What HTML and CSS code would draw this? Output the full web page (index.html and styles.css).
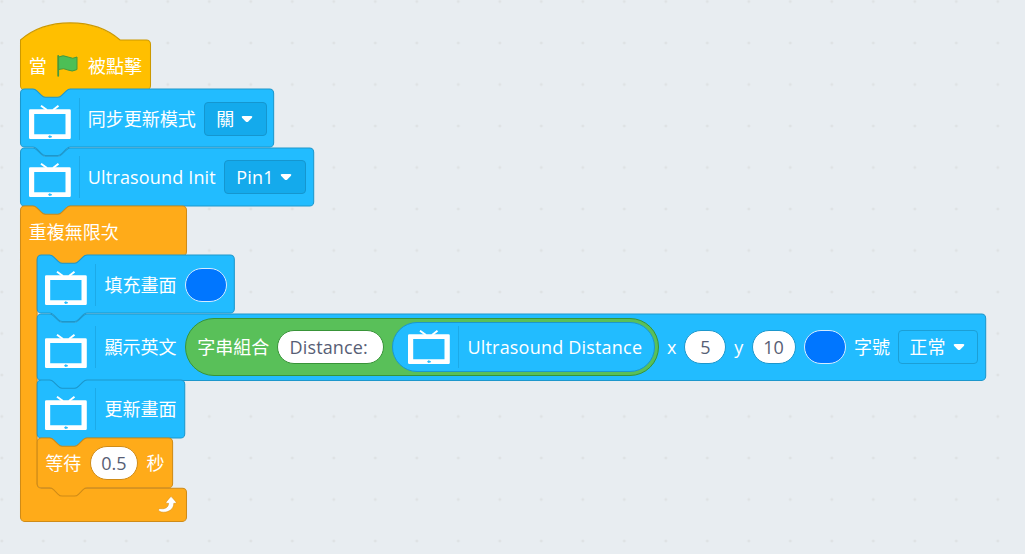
FILE: index.html
```html
<!DOCTYPE html>
<html lang="zh-Hant">
<head>
<meta charset="utf-8">
<title>Blocks</title>
<link rel="stylesheet" href="styles.css">
</head>
<body>
<svg class="defs" width="0" height="0">
  <defs>
    <symbol id="tv" viewBox="0 0 42 34">
      <path d="M12 .8 18 5M29.500 .8 24 5" stroke="#fff" stroke-width="2" fill="none"/>
      <path fill="#fff" fill-rule="evenodd" d="M1.300 4.300H40.500Q41.800 4.300 41.800 5.600V32.700Q41.800 34 40.500 34H1.300Q0 34 0 32.700V5.600Q0 4.300 1.300 4.300ZM5.200 9V29.200H36.500V9Z"/>
      <path fill="#22bcff" d="M19 31.700 20.500 30.300 22.900 31.200V32.200L20.500 33Z"/>
    </symbol>
    <symbol id="caret" viewBox="0 0 12 8">
      <path fill="#fff" d="M1.800 .9H10.200Q12 1.100 11 2.700L7.300 6.500Q6 7.600 4.700 6.500L1 2.700Q0 1.100 1.800 .9Z"/>
    </symbol>
    <pattern id="grid" x="-18.950" y="-19.250" width="41.500" height="41.500" patternUnits="userSpaceOnUse">
      <path d="M19.250 20.750H22.250M20.750 19.250V22.250" stroke="#dcdee0" stroke-width="1"/>
    </pattern>
  </defs>
</svg>
<main class="workspace">
  <svg class="grid" width="1025" height="554"><rect width="1025" height="554" fill="url(#grid)"/></svg>
  <div class="stack">
    <section class="block hat">
      <svg class="shape yellow" viewBox="-.5 0 1 1"><path transform="scale(1.0375)" d="M0 0C25-22 71-22 96 0H121.300a4 4 0 0 1 4 4V44a4 4 0 0 1-4 4H48c-2 0-3 1-4 2l-4 4c-1 1-2 2-4 2H24c-2 0-3-1-4-2l-4-4c-1-1-2-2-4-2H4a4 4 0 0 1-4-4Z"/></svg>
      <span class="label">當</span>
      <svg class="flag" viewBox="0 0 21 22"><path d="M1.500 2Q6-.5 11 2T20 2V14.500Q15 17.300 11 15T1.500 14.500Z" fill="#4cbf56" stroke="#45993d" stroke-width="1"/><path d="M1.200 1V20.800" stroke="#45993d" stroke-width="1.800" stroke-linecap="round"/></svg>
      <span class="label">被點擊</span>
    </section>
    <section class="block">
      <svg class="shape blue" viewBox="-.5 0 1 1"><path transform="scale(1.0375)" d="M0 4a4 4 0 0 1 4-4H12c2 0 3 1 4 2l4 4c1 1 2 2 4 2H36c2 0 3-1 4-2l4-4c1-1 2-2 4-2H240a4 4 0 0 1 4 4V52a4 4 0 0 1-4 4H48c-2 0-3 1-4 2l-4 4c-1 1-2 2-4 2H24c-2 0-3-1-4-2l-4-4c-1-1-2-2-4-2H4a4 4 0 0 1-4-4Z"/></svg>
      <svg class="tv"><use href="#tv"/></svg><i class="rule"></i>
      <span class="label">同步更新模式</span>
      <span class="dropdown">關<svg class="caret"><use href="#caret"/></svg></span>
    </section>
    <section class="block">
      <svg class="shape blue" viewBox="-.5 0 1 1"><path transform="scale(1.0375)" d="M0 4a4 4 0 0 1 4-4H12c2 0 3 1 4 2l4 4c1 1 2 2 4 2H36c2 0 3-1 4-2l4-4c1-1 2-2 4-2H278.600a4 4 0 0 1 4 4V52a4 4 0 0 1-4 4H48c-2 0-3 1-4 2l-4 4c-1 1-2 2-4 2H24c-2 0-3-1-4-2l-4-4c-1-1-2-2-4-2H4a4 4 0 0 1-4-4Z"/></svg>
      <svg class="tv"><use href="#tv"/></svg><i class="rule"></i>
      <span class="label w-init">Ultrasound Init</span>
      <span class="dropdown"><span class="w-pin">Pin1</span><svg class="caret"><use href="#caret"/></svg></span>
    </section>
    <section class="loop">
      <svg class="shape orange" viewBox="-.5 0 1 1"><path transform="scale(1.0375)" d="M0 4a4 4 0 0 1 4-4H12c2 0 3 1 4 2l4 4c1 1 2 2 4 2H36c2 0 3-1 4-2l4-4c1-1 2-2 4-2H156a4 4 0 0 1 4 4V44a4 4 0 0 1-4 4H64c-2 0-3 1-4 2l-4 4c-1 1-2 2-4 2H40c-2 0-3-1-4-2l-4-4c-1-1-2-2-4-2H20a4 4 0 0 0-4 4V268a4 4 0 0 0 4 4H156a4 4 0 0 1 4 4V300a4 4 0 0 1-4 4H4a4 4 0 0 1-4-4Z"/></svg>
      <div class="block short loop-head"><span class="label">重複無限次</span></div>
      <div class="loop-body">
        <section class="block">
          <svg class="shape blue" viewBox="-.2 0 1 1"><path transform="scale(1.0375)" d="M0 4a4 4 0 0 1 4-4H12c2 0 3 1 4 2l4 4c1 1 2 2 4 2H36c2 0 3-1 4-2l4-4c1-1 2-2 4-2H186a4 4 0 0 1 4 4V52a4 4 0 0 1-4 4H48c-2 0-3 1-4 2l-4 4c-1 1-2 2-4 2H24c-2 0-3-1-4-2l-4-4c-1-1-2-2-4-2H4a4 4 0 0 1-4-4Z"/></svg>
          <svg class="tv"><use href="#tv"/></svg><i class="rule"></i>
          <span class="label">填充畫面</span>
          <span class="color"></span>
        </section>
        <section class="block tall">
          <svg class="shape blue" viewBox="-.2 0 1 1"><path transform="scale(1.0375)" d="M0 4a4 4 0 0 1 4-4H12c2 0 3 1 4 2l4 4c1 1 2 2 4 2H36c2 0 3-1 4-2l4-4c1-1 2-2 4-2H910.200a4 4 0 0 1 4 4V60a4 4 0 0 1-4 4H48c-2 0-3 1-4 2l-4 4c-1 1-2 2-4 2H24c-2 0-3-1-4-2l-4-4c-1-1-2-2-4-2H4a4 4 0 0 1-4-4Z"/></svg>
          <svg class="tv"><use href="#tv"/></svg><i class="rule"></i>
          <span class="label">顯示英文</span>
          <span class="join">
            <span class="label">字串組合</span>
            <span class="input in-text"><span class="w-dist">Distance:</span></span>
            <span class="reporter">
              <svg class="tv"><use href="#tv"/></svg><i class="rule"></i>
              <span class="label w-report">Ultrasound Distance</span>
            </span>
          </span>
          <span class="label w-letter">x</span>
          <span class="input in-x">5</span>
          <span class="label w-letter">y</span>
          <span class="input in-y">10</span>
          <span class="color"></span>
          <span class="label">字號</span>
          <span class="dropdown plain">正常<svg class="caret"><use href="#caret"/></svg></span>
        </section>
        <section class="block">
          <svg class="shape blue" viewBox="-.2 0 1 1"><path transform="scale(1.0375)" d="M0 4a4 4 0 0 1 4-4H12c2 0 3 1 4 2l4 4c1 1 2 2 4 2H36c2 0 3-1 4-2l4-4c1-1 2-2 4-2H138.200a4 4 0 0 1 4 4V52a4 4 0 0 1-4 4H48c-2 0-3 1-4 2l-4 4c-1 1-2 2-4 2H24c-2 0-3-1-4-2l-4-4c-1-1-2-2-4-2H4a4 4 0 0 1-4-4Z"/></svg>
          <svg class="tv"><use href="#tv"/></svg><i class="rule"></i>
          <span class="label">更新畫面</span>
        </section>
        <section class="block short">
          <svg class="shape orange" viewBox="-.2 0 1 1"><path transform="scale(1.0375)" d="M0 4a4 4 0 0 1 4-4H12c2 0 3 1 4 2l4 4c1 1 2 2 4 2H36c2 0 3-1 4-2l4-4c1-1 2-2 4-2H126.500a4 4 0 0 1 4 4V44a4 4 0 0 1-4 4H48c-2 0-3 1-4 2l-4 4c-1 1-2 2-4 2H24c-2 0-3-1-4-2l-4-4c-1-1-2-2-4-2H4a4 4 0 0 1-4-4Z"/></svg>
          <span class="label">等待</span>
          <span class="input in-wait">0.5</span>
          <span class="label">秒</span>
        </section>
      </div>
      <div class="loop-foot">
        <svg class="repeat" viewBox="0 0 19 17"><path d="M13.500 .8 18.200 6.200Q18.500 7.300 17.400 7.300H15.800C15.800 13 11 16.200 5.500 16.200 2.500 16.200 .5 15 .5 14 .5 12.800 1.700 12.500 3 12.700 7.500 13.300 10.500 11 10.600 7.300H8.800Q7.600 7.200 8.200 6L12.400 .9Q13 .3 13.500 .8Z" fill="#fff" stroke="#cf8b17" stroke-width=".5"/></svg>
      </div>
    </section>
  </div>
</main>
</body>
</html>
```
FILE: styles.css
```css
* { box-sizing: border-box; }
body { margin: 0; }
.defs { display: block; }
.workspace {
  position: relative;
  width: 1025px;
  height: 554px;
  overflow: hidden;
  padding: 39.700px 0 0 20.450px;
  background: #e8edf1;
  color: #fff;
  font: 400 18px/24px "Open Sans", "Noto Sans CJK TC", sans-serif;
  white-space: nowrap;
}
.grid { position: absolute; inset: 0; }
.stack { position: relative; display: flex; flex-direction: column; }
.block {
  position: relative;
  display: flex;
  align-items: center;
  gap: 8.300px;
  height: 58.100px;
  padding-left: 8.300px;
}
.hat, .short { height: 49.800px; }
.hat { padding-top: 2px; }
.tall { height: 66.400px; }
.shape {
  position: absolute;
  left: 0;
  top: 0;
  width: 1px;
  height: 1px;
  overflow: visible;
}
.yellow { fill: #ffbf00; stroke: #cc9900; }
.blue { fill: #22bcff; stroke: #1c97cc; }
.orange { fill: #ffab19; stroke: #cf8b17; }
.label, .tv, .rule, .flag, .input, .dropdown, .color, .join { position: relative; flex: none; }
.flag { width: 21px; height: 22px; margin: 0 1.500px 0 2.200px; }
.tv { width: 42px; height: 34px; margin-top: 7.600px; }
.rule { width: 1px; height: 42px; margin-left: -.500px; background: #1caae8; }
.dropdown {
  display: flex;
  align-items: center;
  gap: 7px;
  height: 34px;
  padding: 0 12.500px 0 11px;
  border: 1px solid #1596cf;
  border-radius: 4px;
  background: #14aaec;
}
.plain { background: #22bcff; border-color: #1c9fd6; }
.caret { width: 12px; height: 8px; margin-top: 1px; }
.color {
  width: 42px;
  height: 34px;
  border: 1.500px solid #d4ecff;
  border-radius: 17px;
  background: #0076ff;
}
.input {
  display: flex;
  align-items: center;
  justify-content: center;
  height: 34px;
  border: 1px solid #1c97cc;
  border-radius: 17px;
  background: #fff;
  color: #575e75;
}
.in-text { width: 107px; border-color: #389438; }
.in-x { width: 42px; }
.in-y { width: 44px; }
.in-wait { width: 48.500px; border-color: #cf8b17; }
.join {
  display: flex;
  align-items: center;
  gap: 7.800px;
  width: 474px;
  height: 58.500px;
  padding-left: 11.500px;
  border: 1px solid #389438;
  border-radius: 29.250px;
  background: #59c059;
}
.reporter {
  display: flex;
  align-items: center;
  gap: 8.300px;
  width: 263.500px;
  height: 50.500px;
  padding-left: 15.500px;
  border: 1px solid #1c97cc;
  border-radius: 25.250px;
  background: #22bcff;
}
.reporter .tv { margin-top: 0; }
.w-init { width: 128px; letter-spacing: .160px; }
.w-pin { width: 37px; letter-spacing: .200px; }
.w-dist { width: 82px; letter-spacing: .150px; }
.w-report { width: 175px; letter-spacing: .200px; }
.w-letter { width: 9px; }
.tall > .input + .w-letter, .tall > .color { margin-left: -.300px; }
.tall > .dropdown { margin-left: -.700px; }
.loop { position: relative; }
.loop-head { padding-top: 3px; }
.loop-body { display: flex; flex-direction: column; padding-left: 16.600px; }
.loop-foot {
  position: relative;
  display: flex;
  align-items: center;
  justify-content: flex-end;
  width: 166px;
  height: 33.200px;
  padding: 1px 9px 0 0;
}
.repeat { width: 19px; height: 17px; }
```
